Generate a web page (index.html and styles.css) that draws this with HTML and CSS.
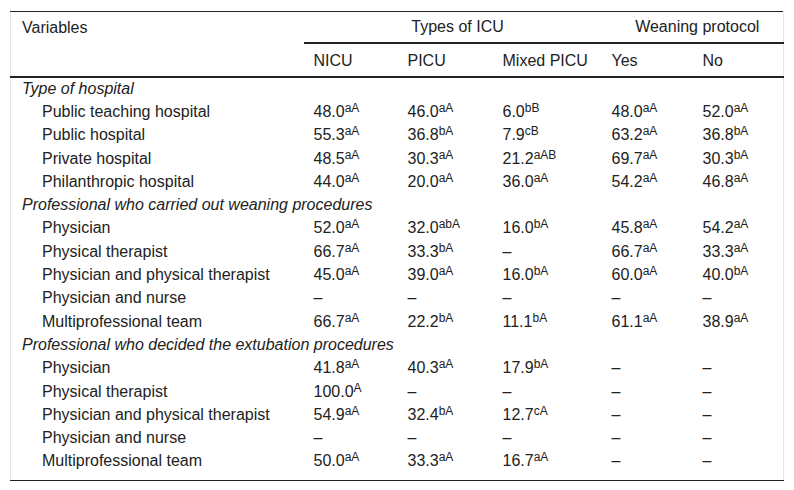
FILE: index.html
```html
<!DOCTYPE html>
<html>
<head>
<meta charset="utf-8">
<link rel="stylesheet" href="styles.css">
</head>
<body>
<div class="page">
<table class="tbl">
  <colgroup>
    <col class="c-var"><col class="c-nicu"><col class="c-picu"><col class="c-mixed"><col class="c-yes"><col class="c-no">
  </colgroup>
  <thead>
    <tr class="h1">
      <th class="left">Variables</th>
      <th colspan="3" class="group">Types of ICU</th>
      <th colspan="2" class="group">Weaning protocol</th>
    </tr>
    <tr class="h2">
      <th class="left"></th>
      <th>NICU</th><th>PICU</th><th>Mixed PICU</th><th>Yes</th><th>No</th>
    </tr>
  </thead>
  <tbody>
    <tr><td class="sec" colspan="6">Type of hospital</td></tr>
    <tr><td class="item">Public teaching hospital</td><td>48.0<sup>aA</sup></td><td>46.0<sup>aA</sup></td><td>6.0<sup>bB</sup></td><td>48.0<sup>aA</sup></td><td>52.0<sup>aA</sup></td></tr>
    <tr><td class="item">Public hospital</td><td>55.3<sup>aA</sup></td><td>36.8<sup>bA</sup></td><td>7.9<sup>cB</sup></td><td>63.2<sup>aA</sup></td><td>36.8<sup>bA</sup></td></tr>
    <tr><td class="item">Private hospital</td><td>48.5<sup>aA</sup></td><td>30.3<sup>aA</sup></td><td>21.2<sup>aAB</sup></td><td>69.7<sup>aA</sup></td><td>30.3<sup>bA</sup></td></tr>
    <tr><td class="item">Philanthropic hospital</td><td>44.0<sup>aA</sup></td><td>20.0<sup>aA</sup></td><td>36.0<sup>aA</sup></td><td>54.2<sup>aA</sup></td><td>46.8<sup>aA</sup></td></tr>
    <tr><td class="sec" colspan="6">Professional who carried out weaning procedures</td></tr>
    <tr><td class="item">Physician</td><td>52.0<sup>aA</sup></td><td>32.0<sup>abA</sup></td><td>16.0<sup>bA</sup></td><td>45.8<sup>aA</sup></td><td>54.2<sup>aA</sup></td></tr>
    <tr><td class="item">Physical therapist</td><td>66.7<sup>aA</sup></td><td>33.3<sup>bA</sup></td><td>–</td><td>66.7<sup>aA</sup></td><td>33.3<sup>aA</sup></td></tr>
    <tr><td class="item">Physician and physical therapist</td><td>45.0<sup>aA</sup></td><td>39.0<sup>aA</sup></td><td>16.0<sup>bA</sup></td><td>60.0<sup>aA</sup></td><td>40.0<sup>bA</sup></td></tr>
    <tr><td class="item">Physician and nurse</td><td>–</td><td>–</td><td>–</td><td>–</td><td>–</td></tr>
    <tr><td class="item">Multiprofessional team</td><td>66.7<sup>aA</sup></td><td>22.2<sup>bA</sup></td><td>11.1<sup>bA</sup></td><td>61.1<sup>aA</sup></td><td>38.9<sup>aA</sup></td></tr>
    <tr><td class="sec" colspan="6">Professional who decided the extubation procedures</td></tr>
    <tr><td class="item">Physician</td><td>41.8<sup>aA</sup></td><td>40.3<sup>aA</sup></td><td>17.9<sup>bA</sup></td><td>–</td><td>–</td></tr>
    <tr><td class="item">Physical therapist</td><td>100.0<sup>A</sup></td><td>–</td><td>–</td><td>–</td><td>–</td></tr>
    <tr><td class="item">Physician and physical therapist</td><td>54.9<sup>aA</sup></td><td>32.4<sup>bA</sup></td><td>12.7<sup>cA</sup></td><td>–</td><td>–</td></tr>
    <tr><td class="item">Physician and nurse</td><td>–</td><td>–</td><td>–</td><td>–</td><td>–</td></tr>
    <tr class="last"><td class="item">Multiprofessional team</td><td>50.0<sup>aA</sup></td><td>33.3<sup>aA</sup></td><td>16.7<sup>aA</sup></td><td>–</td><td>–</td></tr>
  </tbody>
</table>
</div>
</body>
</html>
```
FILE: styles.css
```css
html, body {
  margin: 0;
  padding: 0;
  background: #fff;
}
.page {
  padding: 11px 10px 0 10px;
}
.tbl {
  width: 774px;
  border-collapse: collapse;
  table-layout: fixed;
  font-family: "Liberation Sans", Arial, sans-serif;
  font-size: 16px;
  color: #222;
  border-top: 1px solid #222;
  border-bottom: 1px solid #222;
  border-left: 1px solid #e6e6e6;
  border-right: 1px solid #e6e6e6;
}
.c-var { width: 293px; }
.c-nicu { width: 94px; }
.c-picu { width: 95px; }
.c-mixed { width: 109px; }
.c-yes { width: 91px; }
.c-no { width: 91px; }
th {
  font-weight: normal;
  text-align: left;
  padding: 0 0 0 10px;
  line-height: 18px;
}
th.left { padding-left: 11px; }
.h1 th {
  height: 28px;
  padding-top: 1px;
  padding-bottom: 1px;
  vertical-align: middle;
}
.h1 th.group {
  text-align: center;
  border-bottom: 2px solid #222;
}
.h2 th {
  height: 30px;
  padding-top: 2px;
  border-bottom: 2px solid #222;
  vertical-align: middle;
}
td {
  height: 21.3px;
  padding: 0 0 2px 10px;
  line-height: 18px;
  vertical-align: middle;
  white-space: nowrap;
}
td.sec {
  font-style: italic;
  padding-left: 11px;
}
td.item {
  padding-left: 31px;
}
tr.last td { padding-bottom: 8px; }
sup {
  font-size: 12px;
  line-height: 0;
  vertical-align: 5px;
}
```
